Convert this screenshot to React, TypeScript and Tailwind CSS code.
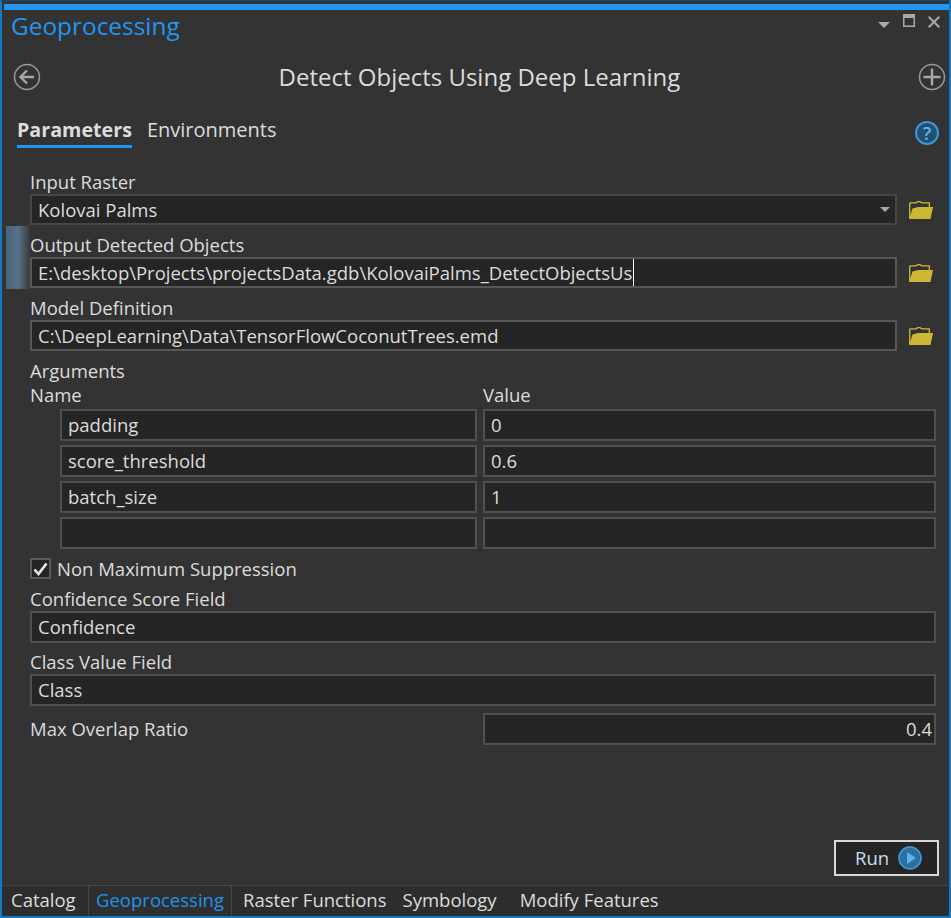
const FONT = "font-['Open_Sans','Noto_Sans',sans-serif]";

const FolderIcon = () => (
  <svg width="24" height="18" viewBox="0 0 24 18" className="shrink-0">
    <path d="M0.7 17V3C0.7 2.2 1.2 1.8 2 1.8H7L8.8 0.6H11L12.8 1.8H20.3V6" fill="none" stroke="#cdb836" strokeWidth="1.3" />
    <path d="M0 18L3.5 7.5L9 6H24L21.5 18Z" fill="#cdb836" />
  </svg>
);

const Field = ({
  label,
  value,
  caret,
  dim,
  arrow,
}: {
  label: string;
  value: string;
  caret?: boolean;
  dim?: boolean;
  arrow?: boolean;
}) => (
  <div>
    <div className="flex h-8 items-end leading-[24px]">{label}</div>
    <div className="flex items-center gap-3">
      <div
        className={`flex h-[31px] flex-1 items-center justify-between border-2 bg-[#252525] pl-[6px] pr-1 ${
          dim ? "border-[#474747]" : "border-[#575757]"
        }`}
      >
        <span className={caret ? "border-r border-white pr-px" : ""}>{value}</span>
        {arrow && (
          <svg width="10" height="6" viewBox="0 0 10 6" className="mr-[1px]">
            <path d="M0 0H10L5 5Z" fill="#a8a8a8" />
          </svg>
        )}
      </div>
      <div className="flex w-[27px]">
        <FolderIcon />
      </div>
    </div>
  </div>
);

const Box = ({ value, right }: { value: string; right?: boolean }) => (
  <div
    className={`flex h-[32px] items-center border-2 border-[#505050] bg-[#252525] px-[6px] ${
      right ? "justify-end pr-[2px]" : ""
    }`}
  >
    {value}
  </div>
);

const args = [
  ["padding", "0"],
  ["score_threshold", "0.6"],
  ["batch_size", "1"],
  ["", ""],
];

const App = () => {
  return (
    <div
      className={`flex h-[918px] w-[951px] flex-col overflow-hidden border-x-2 border-b-2 border-t-[1px] border-x-[#1478c4] border-b-[#1478c4] border-t-[#174a70] bg-[#333333] text-[18.5px] text-[#dcdcdc] ${FONT}`}
    >
      <div className="ml-[2px] mt-[3px] h-[6px] shrink-0 bg-[#2196f3]" />

      <div className="flex h-[36px] shrink-0 items-start justify-between pl-[9px] pr-[9px]">
        <span className="text-[24.4px] leading-[32px] text-[#2196f3]">Geoprocessing</span>
        <div className="flex items-start">
          <svg width="12" height="7" viewBox="0 0 12 7" className="mt-[12px]">
            <path d="M0 0H12L6 6Z" fill="#a9a9a9" />
          </svg>
          <svg width="12" height="13" viewBox="0 0 12 13" className="ml-[13px] mt-[4px]">
            <path d="M0 0H12V13H0Z" fill="#a9a9a9" />
            <path d="M1.5 4H10.5V11.5H1.5Z" fill="#333333" />
          </svg>
          <svg width="12" height="12" viewBox="0 0 12 12" className="ml-[13px] mt-[6px]">
            <path d="M0.7 0.7L11.3 11.3M11.3 0.7L0.7 11.3" stroke="#a9a9a9" strokeWidth="2" />
          </svg>
        </div>
      </div>

      <div className="flex h-[62px] shrink-0 items-center justify-between pl-[11px] pr-[3px]">
        <svg width="28" height="28" viewBox="0 0 28 28">
          <circle cx="14" cy="14" r="12.5" fill="none" stroke="#9a9a9a" strokeWidth="1.5" />
          <path d="M14 7.5L7.5 14L14 20.5M8 14H21" fill="none" stroke="#a8a8a8" strokeWidth="2.4" />
        </svg>
        <span className="text-[24px] text-[#dcdcdc]">Detect Objects Using Deep Learning</span>
        <svg width="28" height="28" viewBox="0 0 28 28">
          <circle cx="14" cy="14" r="12.5" fill="none" stroke="#9a9a9a" strokeWidth="1.5" />
          <path d="M14 5.5V22.5M5.5 14H22.5" fill="none" stroke="#a8a8a8" strokeWidth="2.4" />
        </svg>
      </div>

      <div className="flex h-[48px] shrink-0 items-start justify-between pl-[15px] pr-[10px]">
        <div className="flex gap-[15px] pt-2 text-[20px]">
          <span className="border-b-[3px] border-[#2196f3] pb-[1px] text-[19.7px] font-bold leading-[28px]">Parameters</span>
          <span className="leading-[28px]">Environments</span>
        </div>
        <div className="mt-[13px] flex h-[24px] w-[24px] items-center justify-center rounded-full border-2 border-[#3a9ad9] bg-[#24506f] text-[18px] font-semibold leading-none text-[#5fb4e8]">
          ?
        </div>
      </div>

      <div className="flex min-h-0 flex-1 flex-col pl-[28px] pr-[13px]">
        <div className="mt-[6px]">
          <Field label="Input Raster" value="Kolovai Palms" dim arrow />
          <div className="relative">
            <div className="absolute -left-[24px] top-[1px] h-[63px] w-[24px] bg-gradient-to-r from-[#46627c] via-[#58718a] to-[#3a3a3a]" />
            <Field label="Output Detected Objects" value="E:\desktop\Projects\projectsData.gdb\KolovaiPalms_DetectObjectsUs" caret />
          </div>
          <Field label="Model Definition" value="C:\DeepLearning\Data\TensorFlowCoconutTrees.emd" />
        </div>

        <div className="mt-[7px] leading-[26px]">Arguments</div>
        <div className="-mt-[2px] grid grid-cols-[447px_1fr] gap-x-[6px] leading-[26px]">
          <span>Name</span>
          <span>Value</span>
        </div>
        <div className="mt-[1px] flex flex-col gap-1 pl-[30px]">
          {args.map(([name, value], i) => (
            <div key={i} className="grid grid-cols-[417px_1fr] gap-x-[6px]">
              <Box value={name} />
              <Box value={value} />
            </div>
          ))}
        </div>

        <div className="mt-[9px] flex h-[21px] items-center gap-[6px]">
          <div className="flex h-[21px] w-[21px] items-center justify-center border-2 border-[#5a5a5a] bg-[#252525]">
            <svg width="15" height="14" viewBox="0 0 15 14">
              <path d="M1.5 7.5L5.5 12L13.5 1.5" fill="none" stroke="#ececec" strokeWidth="2.6" />
            </svg>
          </div>
          <span>Non Maximum Suppression</span>
        </div>

        <div className="mt-[1px]">
          <div className="flex h-[31px] items-end leading-[24px]">Confidence Score Field</div>
          <Box value="Confidence" />
          <div className="flex h-[31px] items-end leading-[24px]">Class Value Field</div>
          <Box value="Class" />
        </div>

        <div className="mt-[7px] grid grid-cols-[453px_1fr] items-center">
          <span>Max Overlap Ratio</span>
          <Box value="0.4" right />
        </div>

        <div className="mt-auto flex justify-end pb-[9px]">
          <button className="-mr-[3px] flex h-[36px] w-[105px] items-center gap-[9px] border-2 border-[#d8d8d8] bg-[#252525] pl-[19px] text-[#c8dcf0]">
            Run
            <svg width="24" height="24" viewBox="0 0 24 24">
              <circle cx="12" cy="12" r="11" fill="#2f6f9f" stroke="#3d9fe0" strokeWidth="1.5" />
              <path d="M9 6L18 12L9 18Z" fill="#55b3f0" />
            </svg>
          </button>
        </div>
      </div>

      <div className="flex h-[31px] shrink-0 items-stretch border-t border-[#444444] bg-[#2d2d2d] pl-[9px] leading-[28px]">
        <span className="w-[77px]">Catalog</span>
        <span className="-mt-px w-[144px] border-x border-t border-[#484848] bg-[#2f2f2f] text-center text-[#1f94ea]">
          Geoprocessing
        </span>
        <span className="ml-[11px]">Raster Functions</span>
        <span className="ml-[16px]">Symbology</span>
        <span className="ml-[23px]">Modify Features</span>
      </div>
    </div>
  );
};

export default App;
